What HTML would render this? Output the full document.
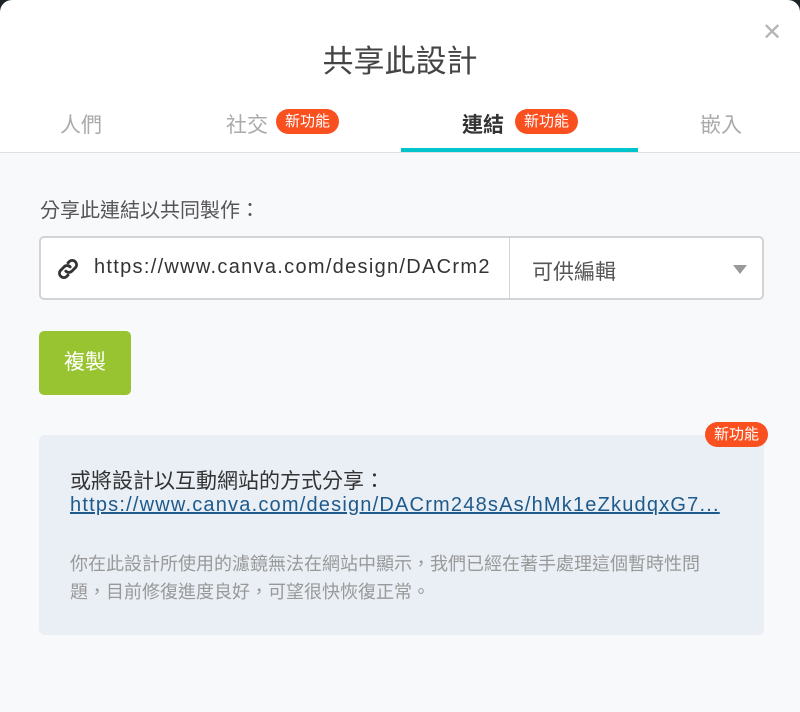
<!DOCTYPE html>
<html><head><meta charset="utf-8"><style>
*{margin:0;padding:0;box-sizing:border-box}
body{width:800px;height:663px;background:#1c2326;overflow:hidden;font-family:"Liberation Sans","Noto Sans CJK TC",sans-serif;position:relative}
.dlg{position:absolute;left:0;top:0;width:800px;height:700px;background:#fff;border-radius:12px 12px 0 0}
.abs{position:absolute;white-space:nowrap}
.title{left:0;width:800px;text-align:center;top:36px;font-size:31px;color:#444}
.close{left:762px;top:18px;font-size:24px;color:#b5b5b5}
.tab{top:109px;font-size:21px;color:#aaa}
.badge{background:#fa4f1e;color:#fff;font-size:15px;border-radius:13px;padding:0 9px;line-height:25px}
.body{position:absolute;left:0;top:152px;width:800px;height:560px;background:#f8f9fb;border-top:1px solid #dde1e4}
</style></head><body>
<div class="dlg">
<div class="abs title">共享此設計</div>
<div class="abs close">✕</div>
<div class="abs tab" style="left:60px">人們</div>
<div class="abs tab" style="left:226px">社交</div>
<div class="abs badge" style="left:276px;top:109px">新功能</div>
<div class="abs tab" style="left:462px;color:#333;font-weight:bold">連結</div>
<div class="abs badge" style="left:515px;top:109px">新功能</div>
<div class="abs tab" style="left:700px">嵌入</div>
<div class="body"></div>
<div class="abs" style="left:401px;top:148px;width:237px;height:4px;background:#00c4cc"></div>
<div class="abs" style="left:40px;top:194px;font-size:20px;color:#555">分享此連結以共同製作：</div>
<div class="abs" style="left:39px;top:236px;width:725px;height:64px;background:#fff;border:2px solid #d4d4d4;border-radius:5px"></div>
<div class="abs" style="left:509px;top:237px;width:1px;height:62px;background:#d4d4d4"></div>
<svg class="abs" style="left:55px;top:256px" width="26" height="26" viewBox="0 0 24 24" fill="none" stroke="#333" stroke-width="2.6" stroke-linecap="round"><path d="M10 14a4 4 0 0 0 5.6 0l3.5-3.5a4 4 0 0 0-5.6-5.6L12 6.4"/><path d="M14 10a4 4 0 0 0-5.6 0l-3.5 3.5a4 4 0 0 0 5.6 5.6L12 17.6"/></svg>
<div class="abs" style="left:94px;top:256px;font-size:20px;color:#333;letter-spacing:1.3px">https://www.canva.com/design/DACrm2</div>
<div class="abs" style="left:532px;top:256px;font-size:21px;color:#555">可供編輯</div>
<div class="abs" style="left:733px;top:265px;width:0;height:0;border-left:7px solid transparent;border-right:7px solid transparent;border-top:9px solid #999"></div>
<div class="abs" style="left:39px;top:331px;width:92px;height:64px;background:#99c432;border-radius:5px;color:#fff;font-size:21px;text-align:center;line-height:64px">複製</div>
<div class="abs" style="left:39px;top:435px;width:725px;height:200px;background:#e9eff5;border-radius:6px"></div>
<div class="abs badge" style="left:705px;top:422px">新功能</div>
<div class="abs" style="left:70px;top:465px;font-size:21px;color:#333">或將設計以互動網站的方式分享：</div>
<div class="abs" style="left:70px;top:494px;font-size:20px;color:#1e5a8c;text-decoration:underline;letter-spacing:1.2px">https://www.canva.com/design/DACrm248sAs/hMk1eZkudqxG7...</div>
<div class="abs" style="left:70px;top:550px;font-size:18px;color:#999;line-height:28px">你在此設計所使用的濾鏡無法在網站中顯示，我們已經在著手處理這個暫時性問<br>題，目前修復進度良好，可望很快恢復正常。</div>
</div>
</body></html>
